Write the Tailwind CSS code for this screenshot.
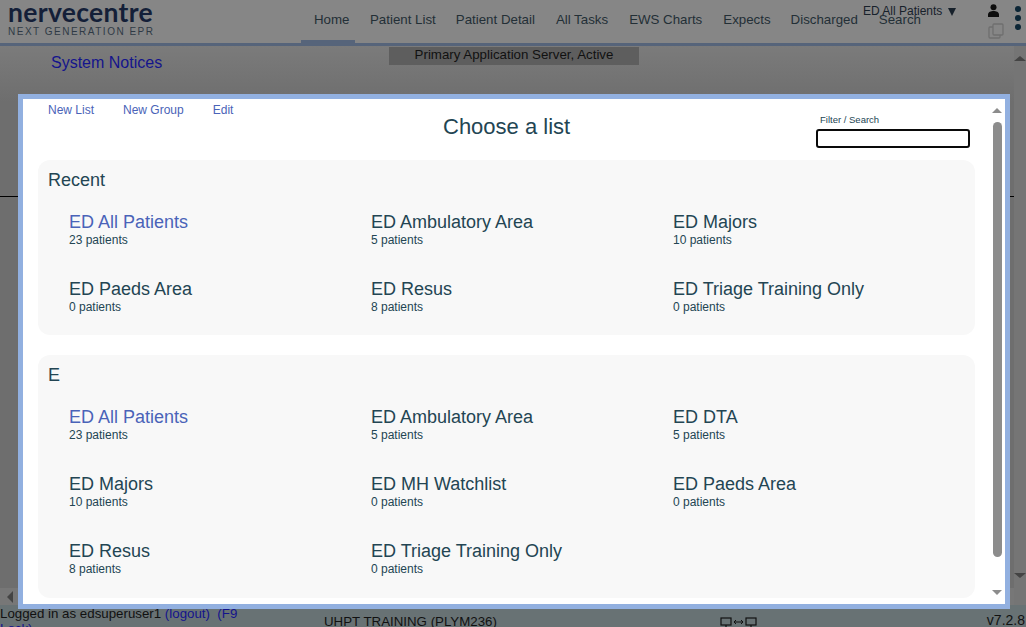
<!DOCTYPE html>
<html lang="en">
<head>
  <meta charset="UTF-8" />
  <meta name="viewport" content="width=device-width, initial-scale=1.0" />
  <title>Choose a list</title>
  <script src="https://cdn.jsdelivr.net/npm/@tailwindcss/browser@4"></script>
</head>
<body class="relative w-[1026px] h-[627px] overflow-hidden bg-[#6f6f6f] font-['Liberation_Sans',Arial,sans-serif] text-[#234553]">

  <!-- page behind the dialog -->
  <div class="flex flex-col h-full">
    <header class="flex h-[46px] shrink-0 bg-[#868686] border-b-[3px] border-[#56647a]">
      <div class="w-[301px] shrink-0 pl-2 flex flex-col">
        <span class="h-[26px] font-['Lato',sans-serif] font-bold text-[26.5px] leading-[24px] tracking-[0.3px] text-[#141f38]">nervecentre</span>
        <span class="text-[10px] leading-[11px] tracking-[1.5px] text-[#2f3a45]">NEXT GENERATION EPR</span>
      </div>
      <nav class="flex text-[13.3px] text-[#232f36] leading-[39px]">
        <a class="w-[54px] h-[43px] pl-[13px] border-b-[3px] border-[#56647a]">Home</a>
        <a class="ml-[15px]">Patient List</a>
        <a class="ml-[20px]">Patient Detail</a>
        <a class="ml-[21px]">All Tasks</a>
        <a class="ml-[21px]">EWS Charts</a>
        <a class="ml-[21px]">Expects</a>
        <a class="ml-[20px]">Discharged</a>
        <a class="ml-[21px]">Search</a>
      </nav>
    </header>

    <main class="flex-1 min-h-0 flex bg-linear-to-b from-[#7b7b7b] to-[#6e6e6e] to-[10%]">
      <div class="flex-1 flex flex-col relative">
        <div class="w-[250px] h-[18px] mt-px ml-[389px] bg-[#5e5e5e] text-center text-[13.3px] leading-[16px] text-[#111]">Primary Application Server, Active</div>
        <a class="ml-[51px] text-[16px] leading-[18px] -mt-[11px] text-[#14148c]">System Notices</a>
        <div class="mt-[124px] h-px bg-black"></div>
        <div class="mt-auto flex h-[17px] items-center pl-[7px] bg-[#777]">
          <span class="border-y-[6px] border-r-[6px] border-y-transparent border-r-[#444]"></span>
        </div>
      </div>
      <div class="w-[12px] flex flex-col items-center justify-between pt-[10px] pb-[27px] bg-[#757575]">
        <span class="border-x-[6px] border-b-[5px] border-x-transparent border-b-[#444]"></span>
        <span class="border-x-[6px] border-t-[5px] border-x-transparent border-t-[#444]"></span>
      </div>
    </main>

    <footer class="flex h-[22px] shrink-0 bg-[#687274] text-[13.3px] leading-[15px] text-[#111]">
      <div class="w-[246px] h-[22px] pt-px overflow-hidden">Logged in as edsuperuser1 <a class="text-[#14148c]">(logout)</a>&nbsp; <a class="text-[#14148c]">(F9 Lock)</a></div>
      <div class="ml-[78px] w-[396px] pt-[9px]">UHPT TRAINING (PLYM236)</div>
      <div class="w-[40px] pt-[12px]">
        <svg width="38" height="11" viewBox="0 0 38 11" fill="none" stroke="#111" stroke-width="1.2"><rect x="1" y="1" width="10" height="7"/><path d="M6 8v3M3 10.5h6"/><path d="M14 5h9M16 3l-2 2 2 2M21 3l2 2-2 2" stroke-width="1"/><rect x="26" y="1" width="10" height="7"/><path d="M31 8v3M28 10.5h6"/></svg>
      </div>
      <div class="ml-auto pt-[8px] pr-px text-[14px]">v7.2.8</div>
    </footer>
  </div>

  <!-- header items laid over the nav -->
  <div class="absolute left-[863px] top-[4px] flex items-center text-[12px] leading-[15px] text-[#17212b]">ED All Patients<span class="ml-[6px] border-x-[4.5px] border-t-[8px] border-x-transparent border-t-[#17212b]"></span></div>
  <svg class="absolute left-[987px] top-[4px]" width="13" height="13" viewBox="0 0 13 13" fill="#0d0d0d"><circle cx="6.5" cy="3.2" r="3"/><path d="M1 13v-2.5C1 8 4 7 6.5 7S12 8 12 10.5V13z"/></svg>
  <svg class="absolute left-[988px] top-[23px]" width="16" height="16" viewBox="0 0 16 16" fill="none" stroke="#6f6f6f" stroke-width="1.3"><rect x="5" y="1" width="10" height="11" rx="1"/><path d="M5 4H2a1 1 0 0 0-1 1v9a1 1 0 0 0 1 1h9a1 1 0 0 0 1-1v-2"/></svg>
  <div class="absolute left-[1015px] top-[6px] flex flex-col gap-[3px]">
    <span class="size-[6px] rounded-full bg-[#0c2636]"></span>
    <span class="size-[6px] rounded-full bg-[#0c2636]"></span>
    <span class="size-[6px] rounded-full bg-[#0c2636]"></span>
  </div>

  <!-- dialog -->
  <div class="absolute left-[18px] top-[94px] w-[992px] h-[515px] flex border-[5px] border-[#92b0e0] bg-white">
    <div class="flex-1 min-w-0 flex flex-col">
      <div class="relative h-[61px] shrink-0">
        <div class="flex gap-[29px] pl-[25px] pt-[4px] text-[12px] leading-[15px] text-[#4a63b8]">
          <a>New List</a><a>New Group</a><a>Edit</a>
        </div>
        <h2 class="absolute left-[420px] top-[14px] text-[22px] leading-[27px]">Choose a list</h2>
        <div class="absolute left-[793px] top-[15px] flex flex-col">
          <label class="text-[9.5px] leading-[12px] pl-[4px]">Filter / Search</label>
          <input class="mt-[3px] w-[154px] h-[19px] bg-white border-2 border-[#0a0a0a] rounded-[3px]" />
        </div>
      </div>

      <section class="ml-[15px] w-[937px] h-[175px] shrink-0 rounded-[12px] bg-[#f8f8f8] pl-[10px] pt-[10px]">
        <h3 class="text-[18px] leading-[21px]">Recent</h3>
        <div class="grid grid-cols-[302px_302px_302px] auto-rows-[67px] pl-[21px] pt-[21px]">
          <div><p class="text-[18px] leading-[21px] text-[#4a63b8]">ED All Patients</p><p class="text-[12px] leading-[15px]">23 patients</p></div>
          <div><p class="text-[18px] leading-[21px]">ED Ambulatory Area</p><p class="text-[12px] leading-[15px]">5 patients</p></div>
          <div><p class="text-[18px] leading-[21px]">ED Majors</p><p class="text-[12px] leading-[15px]">10 patients</p></div>
          <div><p class="text-[18px] leading-[21px]">ED Paeds Area</p><p class="text-[12px] leading-[15px]">0 patients</p></div>
          <div><p class="text-[18px] leading-[21px]">ED Resus</p><p class="text-[12px] leading-[15px]">8 patients</p></div>
          <div><p class="text-[18px] leading-[21px]">ED Triage Training Only</p><p class="text-[12px] leading-[15px]">0 patients</p></div>
        </div>
      </section>

      <section class="ml-[15px] mt-[20px] w-[937px] h-[243px] shrink-0 rounded-[12px] bg-[#f8f8f8] pl-[10px] pt-[10px]">
        <h3 class="text-[18px] leading-[21px]">E</h3>
        <div class="grid grid-cols-[302px_302px_302px] auto-rows-[67px] pl-[21px] pt-[21px]">
          <div><p class="text-[18px] leading-[21px] text-[#4a63b8]">ED All Patients</p><p class="text-[12px] leading-[15px]">23 patients</p></div>
          <div><p class="text-[18px] leading-[21px]">ED Ambulatory Area</p><p class="text-[12px] leading-[15px]">5 patients</p></div>
          <div><p class="text-[18px] leading-[21px]">ED DTA</p><p class="text-[12px] leading-[15px]">5 patients</p></div>
          <div><p class="text-[18px] leading-[21px]">ED Majors</p><p class="text-[12px] leading-[15px]">10 patients</p></div>
          <div><p class="text-[18px] leading-[21px]">ED MH Watchlist</p><p class="text-[12px] leading-[15px]">0 patients</p></div>
          <div><p class="text-[18px] leading-[21px]">ED Paeds Area</p><p class="text-[12px] leading-[15px]">0 patients</p></div>
          <div><p class="text-[18px] leading-[21px]">ED Resus</p><p class="text-[12px] leading-[15px]">8 patients</p></div>
          <div><p class="text-[18px] leading-[21px]">ED Triage Training Only</p><p class="text-[12px] leading-[15px]">0 patients</p></div>
        </div>
      </section>
    </div>

    <!-- dialog scrollbar -->
    <div class="w-[17px] shrink-0 flex flex-col items-center pt-[9px] pb-[9px] pl-[1px]">
      <span class="border-x-[5px] border-b-[5px] border-x-transparent border-b-[#8c8c8c]"></span>
      <span class="mt-[9px] w-[9px] h-[435px] rounded-[5px] bg-[#8c8c8c]"></span>
      <span class="mt-auto border-x-[5px] border-t-[5px] border-x-transparent border-t-[#8c8c8c]"></span>
    </div>
  </div>
</body>
</html>
